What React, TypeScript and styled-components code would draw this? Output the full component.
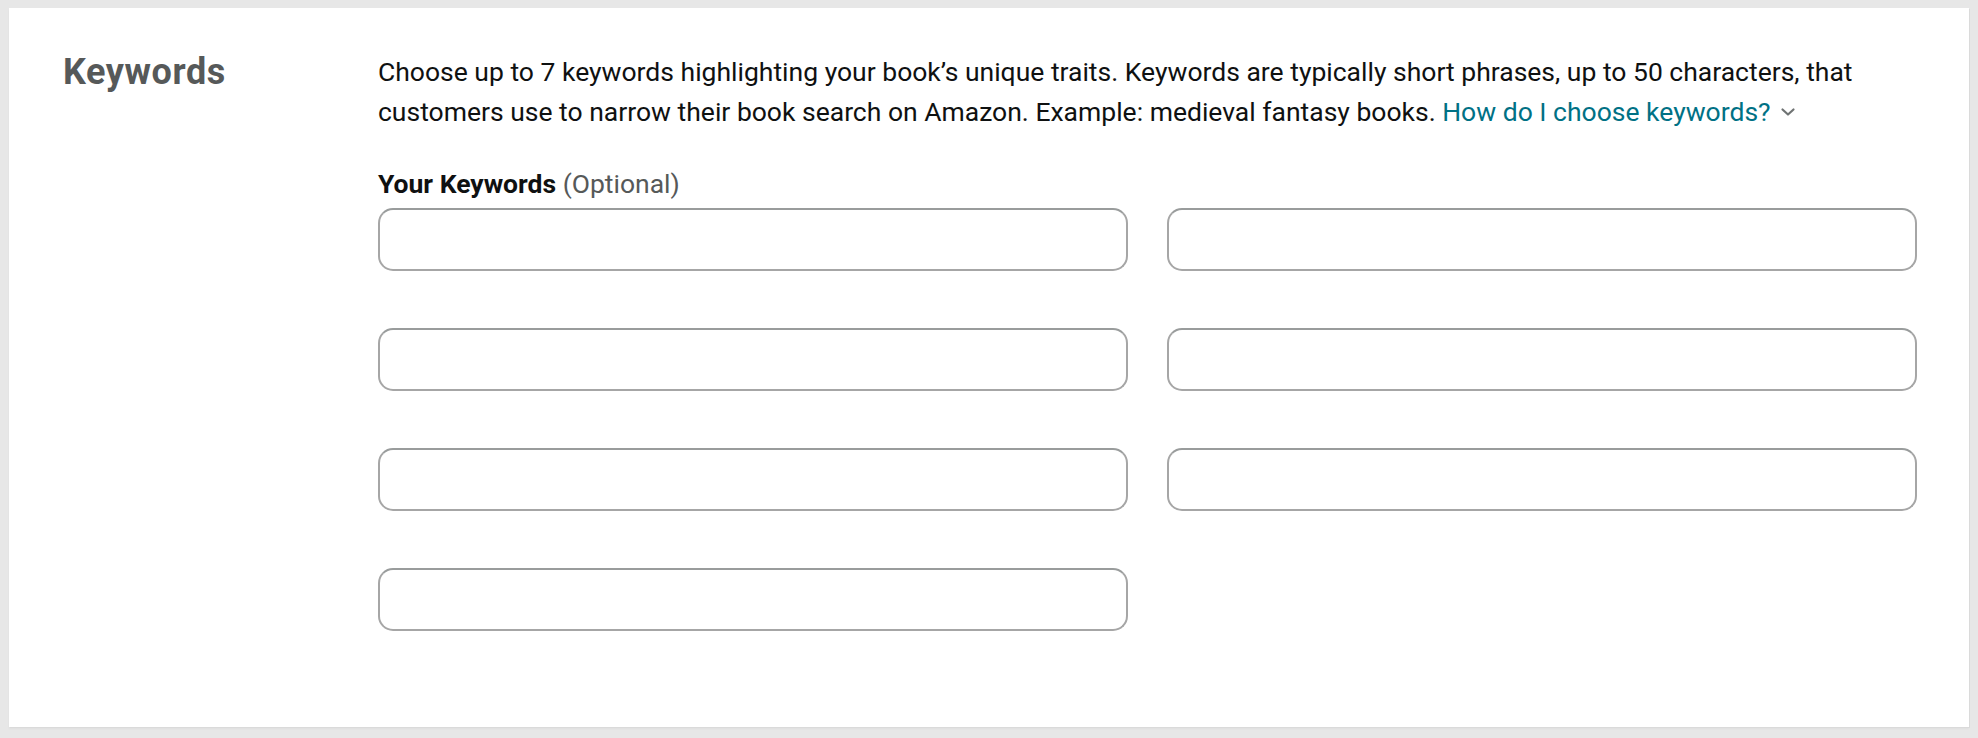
import React from "react";
import styled, { createGlobalStyle } from "styled-components";

const GlobalStyle = createGlobalStyle`
  html, body {
    margin: 0;
    padding: 0;
    background: #e7e7e7;
  }
  body {
    font-family: Roboto, "Liberation Sans", Arial, sans-serif;
    color: #0f1111;
  }
  * { box-sizing: border-box; }
`;

const KEYWORD_SLOTS = 7;

function Chevron() {
  return (
    <ChevronSvg width="16" height="10" viewBox="0 0 16 10" aria-hidden="true">
      <path
        d="M2.5 2.5 L8 7.5 L13.5 2.5"
        fill="none"
        stroke="currentColor"
        strokeWidth="2.2"
        strokeLinecap="round"
        strokeLinejoin="round"
      />
    </ChevronSvg>
  );
}

export default function App() {
  return (
    <>
      <GlobalStyle />
      <Page>
        <Card>
          <SectionTitle>Keywords</SectionTitle>
          <Content>
            <Description>
              Choose up to 7 keywords highlighting your book’s unique traits.
              Keywords are typically short phrases, up to 50 characters, that
              customers use to narrow their book search on Amazon. Example:
              medieval fantasy books.{" "}
              <HelpLink href="#">
                How do I choose keywords?
                <Chevron />
              </HelpLink>
            </Description>

            <FieldLabel>
              Your Keywords <Optional>(Optional)</Optional>
            </FieldLabel>
            <KeywordGrid>
              {Array.from({ length: KEYWORD_SLOTS }).map((_, i) => (
                <KeywordInput key={i} type="text" aria-label={`Keyword ${i + 1}`} />
              ))}
            </KeywordGrid>
          </Content>
        </Card>
      </Page>
    </>
  );
}

/* ─── Styled Components ─────────────────────────── */

const Page = styled.div`
  padding: 8px 9px 11px;
  min-height: 738px;
`;

const Card = styled.section`
  display: grid;
  grid-template-columns: 315px 1fr;
  background: #ffffff;
  height: 719px;
  padding: 44px 52px 0 54px;
  box-shadow: 1px 1px 0 #dadada, 0 2px 2px rgba(0, 0, 0, 0.04);
`;

const SectionTitle = styled.h3`
  margin: 0;
  font-size: 36px;
  line-height: 40px;
  font-weight: 700;
  letter-spacing: 0.6px;
  color: #565959;
`;

const Content = styled.div`
  display: flex;
  flex-direction: column;
  min-width: 0;
`;

const Description = styled.p`
  margin: 0;
  font-size: 26.5px;
  line-height: 40px;
  color: #0f1111;
`;

const HelpLink = styled.a`
  color: #007185;
  text-decoration: none;
  white-space: nowrap;
`;

const ChevronSvg = styled.svg`
  display: inline-block;
  margin-left: 9px;
  vertical-align: 4px;
  color: #6f7373;
`;

const FieldLabel = styled.label`
  margin-top: 32px;
  margin-bottom: 4px;
  font-size: 26.5px;
  line-height: 40px;
  font-weight: 700;
  color: #0f1111;
`;

const Optional = styled.span`
  font-weight: 400;
  color: #565959;
`;

const KeywordGrid = styled.div`
  display: grid;
  grid-template-columns: repeat(2, 1fr);
  column-gap: 39px;
  row-gap: 57px;
`;

const KeywordInput = styled.input`
  height: 63px;
  width: 100%;
  padding: 0 20px;
  border: 2px solid #a6a6a6;
  border-top-color: #999c9c;
  border-radius: 15px;
  background: #ffffff;
  font-family: inherit;
  font-size: 26.5px;
  color: #0f1111;
  outline: none;
`;
